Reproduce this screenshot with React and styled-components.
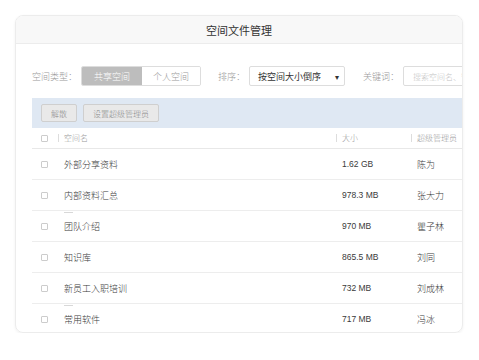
import React from 'react'
import styled, { createGlobalStyle } from 'styled-components'

const rows = [
  { name: '外部分享资料', size: '1.62 GB', admin: '陈为' },
  { name: '内部资料汇总', size: '978.3 MB', admin: '张大力', mark: true },
  { name: '团队介绍', size: '970 MB', admin: '瞿子林' },
  { name: '知识库', size: '865.5 MB', admin: '刘同' },
  { name: '新员工入职培训', size: '732 MB', admin: '刘成林', mark: true },
  { name: '常用软件', size: '717 MB', admin: '冯冰' },
]

const App = () => {
  return (
    <>
      <GlobalStyle />
      <Card>
        <Header>空间文件管理</Header>
        <Body>
          <Toolbar>
            <Label>空间类型：</Label>
            <Segmented>
              <SegButton active>共享空间</SegButton>
              <SegButton>个人空间</SegButton>
            </Segmented>
            <Label gap={17}>排序：</Label>
            <Select>
              <span>按空间大小倒序</span>
              <Arrow>▾</Arrow>
            </Select>
            <Label gap={18}>关键词：</Label>
            <Search placeholder="搜索空间名、管理员" />
          </Toolbar>
          <ActionBar>
            <ActionButton>解散</ActionButton>
            <ActionButton>设置超级管理员</ActionButton>
          </ActionBar>
          <Table>
            <HeadRow>
              <CheckCell><Check /></CheckCell>
              <HeadCell>空间名</HeadCell>
              <HeadCell>大小</HeadCell>
              <HeadCell>超级管理员</HeadCell>
            </HeadRow>
            {rows.map((r) => (
              <Row key={r.name} mark={r.mark}>
                <CheckCell><Check /></CheckCell>
                <Cell>{r.name}</Cell>
                <Cell num>{r.size}</Cell>
                <Cell>{r.admin}</Cell>
              </Row>
            ))}
          </Table>
        </Body>
      </Card>
    </>
  )
}

const GlobalStyle = createGlobalStyle`
  body {
    margin: 0;
    background: #fff;
    font-family: "Liberation Sans", "Noto Sans CJK SC", sans-serif;
  }
`

const cjk = `font-family: "Noto Sans CJK SC", sans-serif; font-weight: 300;`

const Card = styled.div`
  margin: 15px 0 0 15px;
  width: 448px;
  height: 318px;
  border: 1px solid #ececec;
  border-radius: 8px;
  box-sizing: border-box;
  overflow: hidden;
  box-shadow: 0 1px 3px rgba(0, 0, 0, 0.06);
`

const Header = styled.div`
  height: 27px;
  background: #f8f8f8;
  border-bottom: 1px solid #ececec;
  display: flex;
  align-items: center;
  justify-content: center;
  font-family: "Noto Sans CJK SC", sans-serif;
  font-size: 11px;
  color: #333;
`

const Body = styled.div`
  width: 470px;
  padding: 22px 0 0 16px;
`

const Toolbar = styled.div`
  display: flex;
  align-items: center;
  height: 20px;
`

const Label = styled.span`
  ${cjk}
  font-size: 9px;
  color: #999;
  margin-left: ${(p) => p.gap || 0}px;
  margin-right: 4px;
`

const Segmented = styled.div`
  display: flex;
  height: 20px;
  border: 1px solid #ddd;
  border-radius: 2px;
  box-sizing: border-box;
  overflow: hidden;
`

const SegButton = styled.div`
  width: ${(p) => (p.active ? '60px' : '58px')};
  display: flex;
  align-items: center;
  justify-content: center;
  ${cjk}
  font-size: 9px;
  color: ${(p) => (p.active ? '#fff' : '#999')};
  background: ${(p) => (p.active ? '#bdbdbd' : '#fff')};
`

const Select = styled.div`
  width: 96px;
  height: 20px;
  box-sizing: border-box;
  border: 1px solid #ddd;
  border-radius: 2px;
  display: flex;
  align-items: center;
  justify-content: space-between;
  padding: 0 5px 0 8px;
  font-family: "Noto Sans CJK SC", sans-serif;
  font-size: 9px;
  color: #333;
`

const Arrow = styled.span`
  font-size: 8px;
  color: #333;
`

const Search = styled.input`
  width: 90px;
  height: 20px;
  box-sizing: border-box;
  border: 1px solid #ddd;
  border-radius: 2px;
  padding: 0 9px;
  ${cjk}
  font-size: 8px;
  outline: none;
  &::placeholder {
    color: #c4c4c4;
  }
`

const ActionBar = styled.div`
  margin-top: 12px;
  height: 30px;
  background: #dfe8f3;
  display: flex;
  align-items: center;
  gap: 6px;
  padding-left: 9px;
`

const ActionButton = styled.div`
  height: 18px;
  box-sizing: border-box;
  padding: 0 9px;
  display: flex;
  align-items: center;
  background: #e9e9e9;
  border: 1px solid #cfcfcf;
  border-radius: 2px;
  ${cjk}
  font-size: 8px;
  color: #888;
`

const Table = styled.div`
  display: flex;
  flex-direction: column;
`

const gridCols = 'grid-template-columns: 26px 278px 75px 1fr;'

const HeadRow = styled.div`
  display: grid;
  ${gridCols}
  height: 20px;
  align-items: center;
  border-bottom: 1px solid #e8e8e8;
`

const HeadCell = styled.div`
  border-left: 1px solid #ddd;
  height: 8px;
  line-height: 8px;
  padding-left: 5px;
  ${cjk}
  font-size: 8px;
  color: #999;
`

const Row = styled.div`
  display: grid;
  ${gridCols}
  height: 30px;
  align-items: center;
  border-bottom: 1px solid #ededed;
  position: relative;
  &::after {
    content: '';
    display: ${(p) => (p.mark ? 'block' : 'none')};
    position: absolute;
    left: 32px;
    bottom: -3px;
    width: 9px;
    height: 1px;
    background: #d8d8d8;
  }
`

const CheckCell = styled.div`
  display: flex;
  padding-left: 9px;
`

const Check = styled.span`
  width: 7px;
  height: 7px;
  box-sizing: border-box;
  border: 1px solid #ccc;
  border-radius: 1px;
`

const Cell = styled.div`
  padding-left: 6px;
  font-family: ${(p) =>
    p.num ? '"Liberation Sans", sans-serif' : '"Noto Sans CJK SC", sans-serif'};
  font-weight: ${(p) => (p.num ? 400 : 300)};
  font-size: ${(p) => (p.num ? '8.5px' : '9px')};
  color: #3a3a3a;
`

export default App
